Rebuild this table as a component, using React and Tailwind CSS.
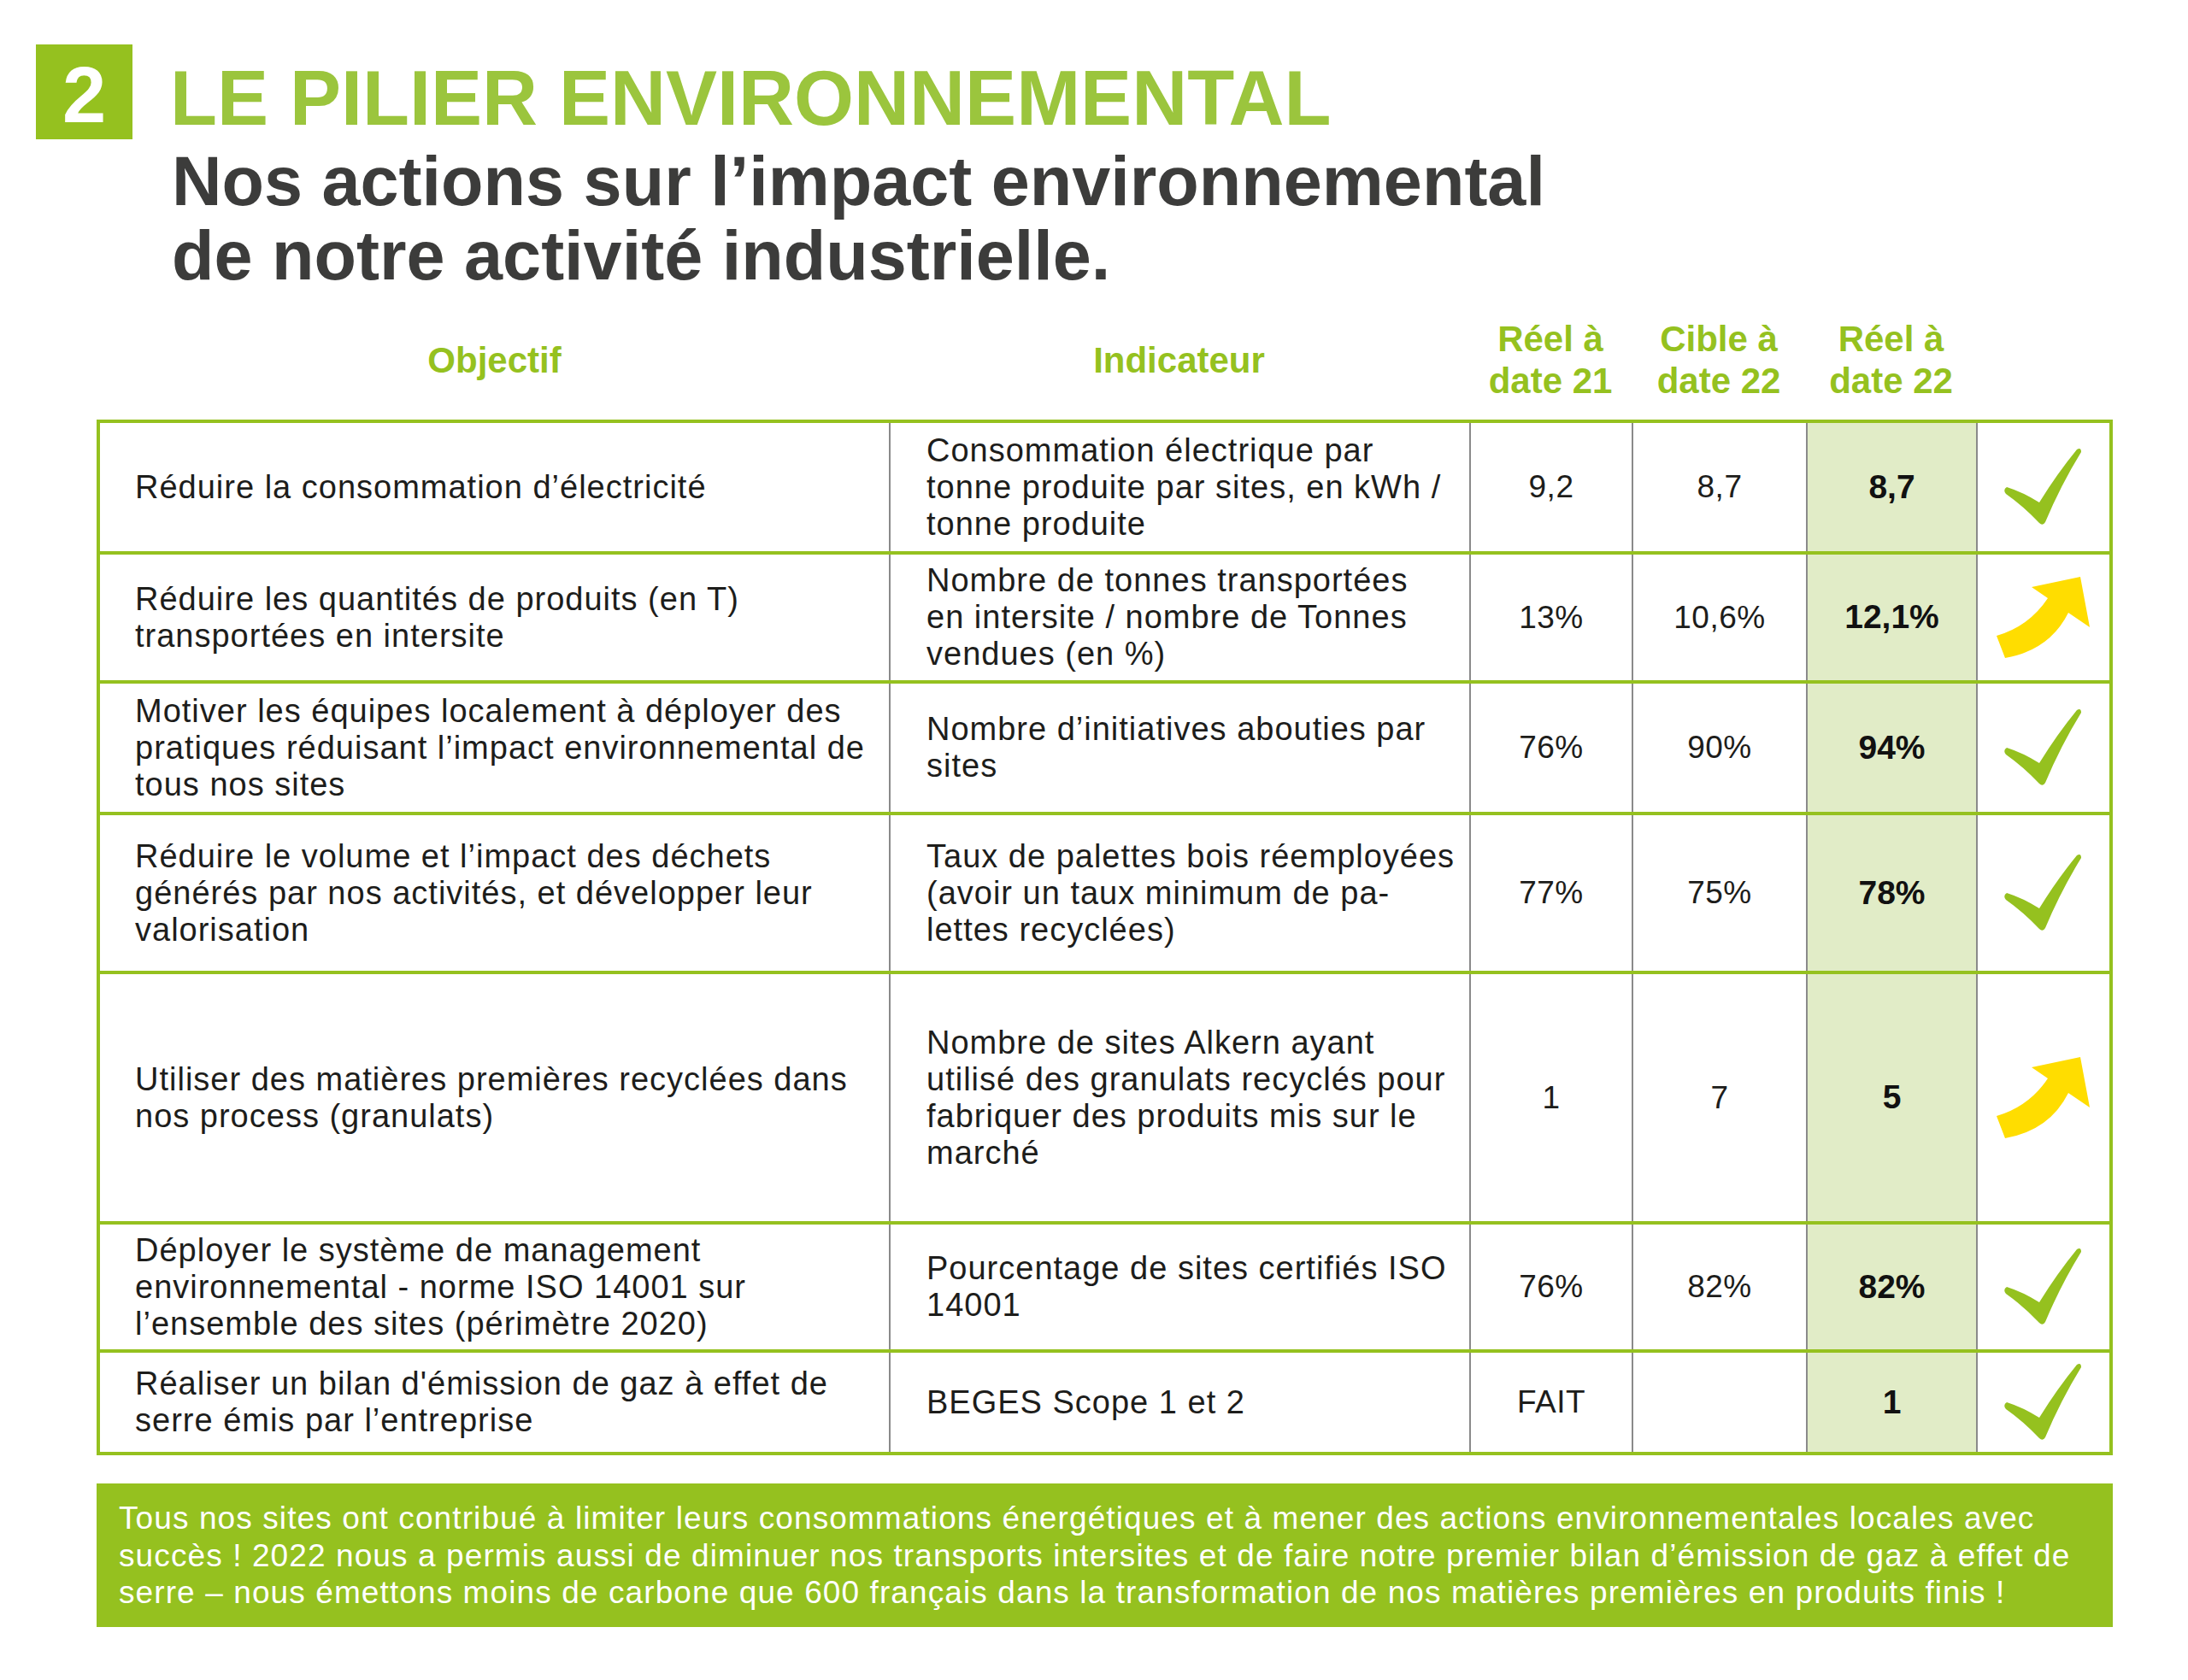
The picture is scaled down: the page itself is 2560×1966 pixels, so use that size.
import React from "react";

function Check() {
  return (
    <svg width="92" height="92" viewBox="0 0 92 92">
      <path
        d="M3,46 Q22,52 41,64 Q62,30 85,2 Q90,-1 90,5 Q66,44 48,87 Q45,92 41,88 Q22,68 2,54 Q-2,49 3,46 Z"
        fill="#95c11f"
      />
    </svg>
  );
}

function Arrow() {
  return (
    <svg width="110" height="96" viewBox="0 0 110 96">
      <path
        d="M0,69 Q38,58 60,25 L41,12 L98,0 L109,59 L84,42 Q62,86 10,95 Z"
        fill="#ffdd00"
      />
    </svg>
  );
}

const rows = [
  {
    cls: "h-[150px]",
    obj: ["Réduire la consommation d’électricité"],
    ind: ["Consommation électrique par", "tonne produite par sites, en kWh /", "tonne produite"],
    a: "9,2",
    b: "8,7",
    c: "8,7",
    icon: "check",
  },
  {
    cls: "h-[151px] border-t-4 border-[#95c11f]",
    obj: ["Réduire les quantités de produits (en T)", "transportées en intersite"],
    ind: ["Nombre de tonnes transportées", "en intersite / nombre de Tonnes", "vendues (en %)"],
    a: "13%",
    b: "10,6%",
    c: "12,1%",
    icon: "arrow",
  },
  {
    cls: "h-[154px] border-t-4 border-[#95c11f]",
    obj: [
      "Motiver les équipes localement à déployer des",
      "pratiques réduisant l’impact environnemental de",
      "tous nos sites",
    ],
    ind: ["Nombre d’initiatives abouties par", "sites"],
    a: "76%",
    b: "90%",
    c: "94%",
    icon: "check",
  },
  {
    cls: "h-[186px] border-t-4 border-[#95c11f]",
    obj: [
      "Réduire le volume et l’impact des déchets",
      "générés par nos activités, et développer leur",
      "valorisation",
    ],
    ind: ["Taux de palettes bois réemployées", "(avoir un taux minimum de pa-", "lettes recyclées)"],
    a: "77%",
    b: "75%",
    c: "78%",
    icon: "check",
  },
  {
    cls: "h-[293px] border-t-4 border-[#95c11f]",
    obj: ["Utiliser des matières premières recyclées dans", "nos process (granulats)"],
    ind: [
      "Nombre de sites Alkern ayant",
      "utilisé des granulats recyclés pour",
      "fabriquer des produits mis sur le",
      "marché",
    ],
    a: "1",
    b: "7",
    c: "5",
    icon: "arrow",
  },
  {
    cls: "h-[150px] border-t-4 border-[#95c11f]",
    obj: [
      "Déployer le système de management",
      "environnemental - norme ISO 14001 sur",
      "l’ensemble des sites (périmètre 2020)",
    ],
    ind: ["Pourcentage de sites certifiés ISO", "14001"],
    a: "76%",
    b: "82%",
    c: "82%",
    icon: "check",
  },
  {
    cls: "h-[120px] border-t-4 border-[#95c11f]",
    obj: ["Réaliser un bilan d'émission de gaz à effet de", "serre émis par l’entreprise"],
    ind: ["BEGES Scope 1 et 2"],
    a: "FAIT",
    b: "",
    c: "1",
    icon: "check",
  },
];

function Lines({ lines }) {
  return (
    <div className="text-[38px] leading-[43px] tracking-[1px] text-[#1d1d1b] whitespace-nowrap">
      {lines.map((l, i) => (
        <div key={i}>{l}</div>
      ))}
    </div>
  );
}

export default function App() {
  return (
    <div className="min-h-screen w-[2560px] bg-white font-['Liberation_Sans',Arial,sans-serif]">
      <div className="pl-[42px] pt-[52px] flex items-start">
        <div className="w-[113px] h-[111px] bg-[#95c11f] flex items-center justify-center text-white font-bold text-[92px] leading-none pt-[6px]">
          2
        </div>
        <div className="ml-[44px] mt-[18px]">
          <div className="text-[90px] leading-[90px] font-bold text-[#9bc53d] whitespace-nowrap">
            LE PILIER ENVIRONNEMENTAL
          </div>
          <div className="mt-[9px] ml-[2px] text-[81px] leading-[87px] font-bold text-[#3c3c3b] whitespace-nowrap">
            <div>Nos actions sur l’impact environnemental</div>
            <div>de notre activité industrielle.</div>
          </div>
        </div>
      </div>

      <div className="ml-[117px] mt-[23px] mb-[15px] h-[110px] grid grid-cols-[923px_679px_190px_204px_199px_156px] text-[#95c11f] font-bold text-[42px] leading-[49px]">
        <div className="flex items-center justify-center">Objectif</div>
        <div className="flex items-center justify-center">Indicateur</div>
        <div className="flex flex-col items-center justify-center text-center">
          <div>Réel à</div>
          <div>date 21</div>
        </div>
        <div className="flex flex-col items-center justify-center text-center">
          <div>Cible à</div>
          <div>date 22</div>
        </div>
        <div className="flex flex-col items-center justify-center text-center">
          <div>Réel à</div>
          <div>date 22</div>
        </div>
        <div />
      </div>

      <div className="ml-[113px] w-[2359px] border-4 border-[#95c11f]">
        {rows.map((r, i) => (
          <div key={i} className={"grid grid-cols-[923px_679px_190px_204px_199px_156px] " + r.cls}>
            <div className="flex items-center pl-[41px]">
              <Lines lines={r.obj} />
            </div>
            <div className="flex items-center pl-[42px] border-l-2 border-[#8a8a8a]">
              <Lines lines={r.ind} />
            </div>
            <div className="flex items-center justify-center border-l-2 border-[#8a8a8a] text-[37px] tracking-[0.5px] text-[#1d1d1b]">
              {r.a}
            </div>
            <div className="flex items-center justify-center border-l-2 border-[#8a8a8a] text-[37px] tracking-[0.5px] text-[#1d1d1b]">
              {r.b}
            </div>
            <div className="flex items-center justify-center border-l-2 border-[#8a8a8a] bg-[#e1ecc7] text-[39px] font-bold text-[#111111]">
              {r.c}
            </div>
            <div className="flex items-center justify-center border-l-2 border-[#8a8a8a]">
              {r.icon === "check" ? <Check /> : <Arrow />}
            </div>
          </div>
        ))}
      </div>

      <div className="ml-[113px] mt-[33px] w-[2359px] h-[168px] bg-[#95c11f] pl-[26px] pt-[19px] text-white text-[37px] leading-[43.5px] tracking-[1.1px] whitespace-nowrap">
        <div>
          Tous nos sites ont contribué à limiter leurs consommations énergétiques et à mener des actions environnementales locales avec
        </div>
        <div>
          succès ! 2022 nous a permis aussi de diminuer nos transports intersites et de faire notre premier bilan d’émission de gaz à effet de
        </div>
        <div>
          serre – nous émettons moins de carbone que 600 français dans la transformation de nos matières premières en produits finis !
        </div>
      </div>
    </div>
  );
}
